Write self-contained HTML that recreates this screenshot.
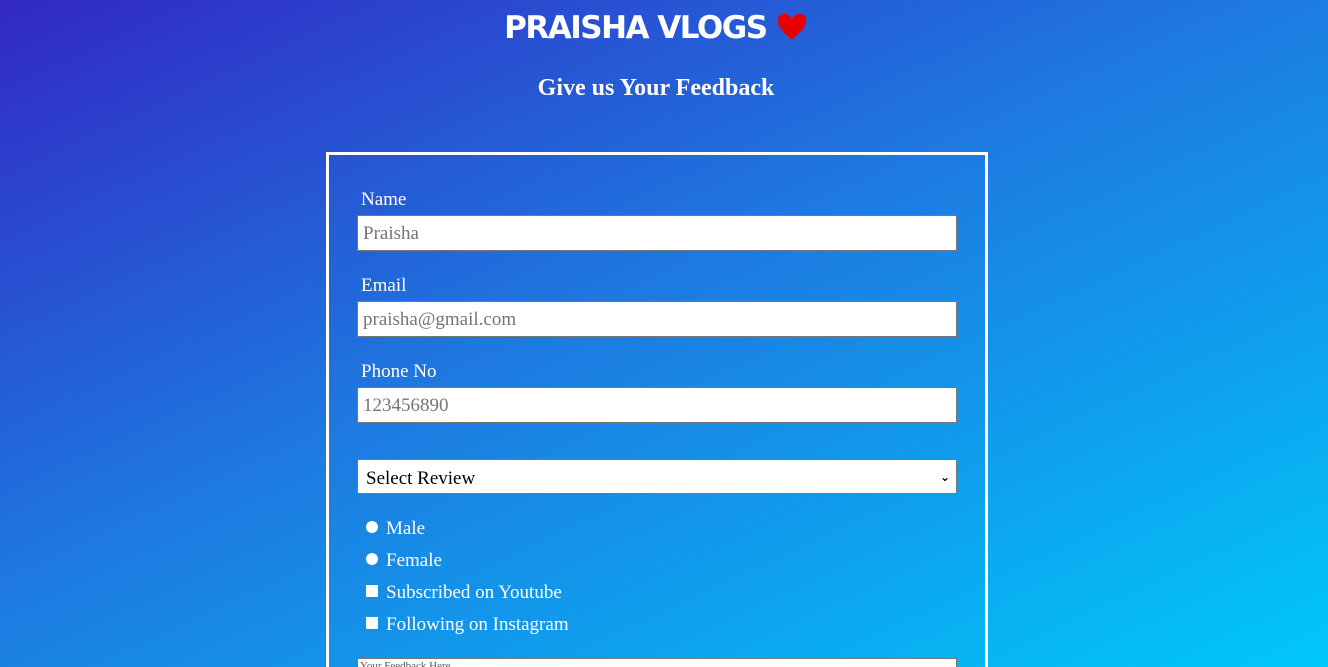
<!DOCTYPE html>
<html style="height:667px;overflow:hidden"><head><style>
html,body{margin:0;width:1328px;height:667px;overflow:hidden}
body{background:linear-gradient(155deg,#3228c4 0%,#1e78e0 45%,#00c8fa 100%);font-family:"Liberation Serif",serif;color:#fff;position:relative}
.t{position:absolute;top:10px;left:0;width:1312px;text-align:center;font:bold 31px "DejaVu Sans",sans-serif;letter-spacing:-1.5px}
.h{position:absolute;top:75px;left:0;width:1312px;text-align:center;font-weight:bold;font-size:24px}
.box{position:absolute;left:326px;top:152px;width:656px;height:515px;border:3px solid #fff;border-bottom:0}
.lab{position:absolute;left:361px;font-size:19px}
.in{position:absolute;left:357px;background:#fff;border:1px solid #777;color:#757575;font-size:19px;line-height:36px;padding-left:5px;box-sizing:border-box;width:600px;height:36px}
.sel{color:#000;padding-left:8px}
.opt{position:absolute;left:366px;font-size:19px}
.r{display:inline-block;width:12px;height:12px;border-radius:50%;background:#fff;margin-right:8px;vertical-align:1px}
.c{display:inline-block;width:12px;height:12px;background:#fff;margin-right:8px;vertical-align:1px}
</style></head><body>
<div class="t">PRAISHA VLOGS <svg width="32" height="30" viewBox="0 0 32 30" style="vertical-align:-3px"><path d="M16 29 C10 23 1 17 2 8 C3 2 12 0 16 8 C20 0 29 2 30 8 C31 17 22 23 16 29Z" fill="#e80000"/></svg></div>
<div class="h">Give us Your Feedback</div>
<div class="box"></div>
<div class="lab" style="top:189px">Name</div>
<div class="in" style="top:215px">Praisha</div>
<div class="lab" style="top:275px">Email</div>
<div class="in" style="top:301px">praisha@gmail.com</div>
<div class="lab" style="top:361px">Phone No</div>
<div class="in" style="top:387px">123456890</div>
<div class="in sel" style="top:459px;height:35px;line-height:37px">Select Review<span style="position:absolute;right:6px;top:-1px;font-size:12px;font-weight:bold;font-family:'DejaVu Sans'">⌄</span></div>
<div class="opt" style="top:518px"><span class="r"></span>Male</div>
<div class="opt" style="top:550px"><span class="r"></span>Female</div>
<div class="opt" style="top:582px"><span class="c"></span>Subscribed on Youtube</div>
<div class="opt" style="top:614px"><span class="c"></span>Following on Instagram</div>
<div class="in" style="top:658px;height:9px;border-bottom:0;font-size:11px;line-height:14px;color:#555;padding-left:2px;overflow:hidden">Your Feedback Here</div>
</body></html>
